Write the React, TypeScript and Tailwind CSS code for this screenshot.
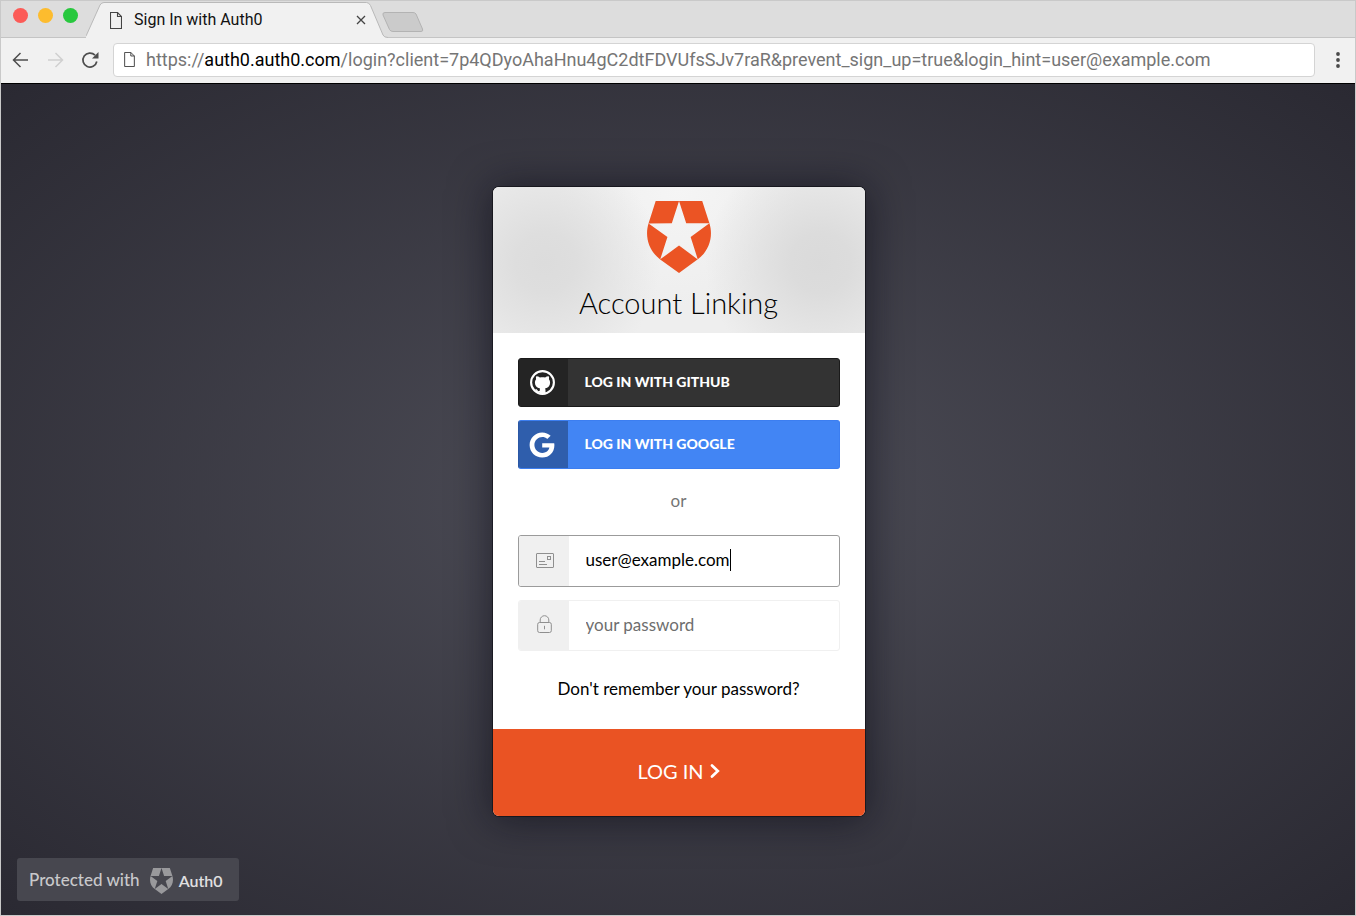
import { useState } from "react";
import { FaGoogle } from "react-icons/fa";

const SHIELD =
  "M21.98 7.448L19.62 0H4.347L2.02 7.448c-1.352 4.312.03 9.206 3.815 12.015L12.007 24l6.157-4.552c3.755-2.81 5.182-7.688 3.815-12.015l-6.16 4.58 2.343 7.45-6.157-4.597-6.158 4.58 2.358-7.433-6.188-4.55 7.63-.045L12.008 0l2.356 7.404 7.615.044z";

function Shield({ className }: { className: string }) {
  return (
    <svg viewBox="1.5 0 21 24" preserveAspectRatio="none" fill="currentColor" className={className} aria-hidden="true">
      <path d={SHIELD} />
    </svg>
  );
}

function PageIcon({ className }: { className: string }) {
  return (
    <svg viewBox="0 0 12 17" fill="none" stroke="currentColor" strokeWidth="1.1" className={className} aria-hidden="true">
      <path d="M.5.5h7l4 4v12H.5z" />
      <path d="M7.5.5v4h4" />
    </svg>
  );
}

function GithubIcon() {
  return (
    <svg viewBox="0 0 25 25" className="size-[25px]" aria-hidden="true">
      <circle cx="12.5" cy="12.5" r="11.4" fill="none" stroke="white" strokeWidth="2.1" />
      <path
        fill="white"
        d="M6.300 6.300C7.500 6.200 8.800 6.700 9.900 7.500c1.700-.4 3.500-.4 5.200 0 1.100-.8 2.400-1.300 3.600-1.200.5 1 .5 2.100.2 3 .8.9 1.200 2 1.200 3.300 0 3.600-1.800 5.300-5.100 5.800.3.500.5 1.100.5 1.900v3.900H9.600v-2.200c-2 .2-2.800-.4-3.500-1.600-.3-.6-.8-1-1.200-1.300 1.200-.2 2 .4 2.600 1.200.6.800 1.200 1 2.100.8.1-1 .2-2 .5-2.700-3.300-.5-5.200-2.200-5.200-5.800 0-1.300.4-2.400 1.200-3.300-.3-.9-.3-2 .2-3z"
      />
    </svg>
  );
}

function Browser() {
  return (
    <header className="bg-[#f1f1f1] font-[Roboto,sans-serif]">
      <div className="flex h-[37px] items-end border-b border-[#c4c4c4] bg-[#dddddd]">
        <div className="flex gap-2.5 self-start pt-[7px] pl-3">
          <span className="size-[15px] rounded-full bg-[#fc5b57]" />
          <span className="size-[15px] rounded-full bg-[#fdbc2e]" />
          <span className="size-[15px] rounded-full bg-[#28c83e]" />
        </div>
        <div className="relative -mb-px ml-2 flex h-[36px] w-[302px] items-center pr-[22px] pl-6">
          <svg viewBox="0 0 302 36" className="absolute inset-0 size-full" aria-hidden="true">
            <path
              d="M-2 35.500Q-.5 35.500 .5 33L14 3Q15.500.5 18 .5H280.500Q283 .5 284.500 3.500L297 33Q298 35.500 302 35.500V36H-2z"
              fill="#f1f1f1"
            />
            <path
              d="M-2 35.500Q-.5 35.500 .5 33L14 3Q15.500.5 18 .5H280.500Q283 .5 284.500 3.500L297 33Q298 35.500 302 35.500"
              fill="none"
              stroke="#b9b9b9"
            />
          </svg>
          <PageIcon className="relative h-[17px] w-3 text-[#444]" />
          <span className="relative ml-3 flex-1 text-base leading-5 text-[#111]">Sign In with Auth0</span>
          <button type="button" aria-label="Close tab" className="relative">
            <svg viewBox="0 0 10 10" className="size-[10px]" stroke="#444" strokeWidth="1.3" aria-hidden="true">
              <path d="M1 1l8 8M9 1L1 9" />
            </svg>
          </button>
        </div>
        <button type="button" aria-label="New tab" className="-ml-1.5 mb-[5px]">
          <svg viewBox="0 0 42 20" className="h-5 w-[42px]" aria-hidden="true">
            <path
              d="M3 .5H31Q33 .5 34 2L40.500 17Q41.500 19.500 39 19.500H11Q8.500 19.500 7.500 17.500L1 3Q.3.5 3 .5z"
              fill="#cbcbcb"
              stroke="#b3b3b3"
            />
          </svg>
        </button>
      </div>
      <div className="flex h-[46px] items-center border-b border-black pb-0.5 pl-[11px]">
        <button type="button" aria-label="Back" className="text-[#4d4d4d]">
          <svg viewBox="0 0 16 16" className="size-4" fill="none" stroke="currentColor" strokeWidth="1.500" aria-hidden="true">
            <path d="M16 8H1.500M8.500 1L1.500 8l7 7" />
          </svg>
        </button>
        <button type="button" aria-label="Forward" className="ml-5 text-[#d0d0d0]">
          <svg viewBox="0 0 16 16" className="size-4" fill="none" stroke="currentColor" strokeWidth="1.500" aria-hidden="true">
            <path d="M0 8h14.500M7.500 1l7 7-7 7" />
          </svg>
        </button>
        <button type="button" aria-label="Reload" className="ml-[17px] text-[#4d4d4d]">
          <svg viewBox="0 0 18 18" className="size-[18px]" fill="none" stroke="currentColor" strokeWidth="1.700" aria-hidden="true">
            <path d="M15.800 10.500A7 7 0 1 1 14 4.200" />
            <path d="M17.500 1v6.500H11z" fill="currentColor" stroke="none" />
          </svg>
        </button>
        <div className="ml-3.5 flex h-[34px] min-w-0 flex-1 items-center rounded border border-[#d4d4d4] bg-white pl-[10px]">
          <PageIcon className="h-[15px] w-[11px] shrink-0 text-[#444]" />
          <span className="ml-[11px] truncate text-lg leading-6 text-[#757575]">
            https://<span className="text-black">auth0.auth0.com</span>
            /login?client=7p4QDyoAhaHnu4gC2dtFDVUfsSJv7raR&amp;prevent_sign_up=true&amp;login_hint=user@example.com
          </span>
        </div>
        <button type="button" aria-label="Menu" className="mr-3.5 ml-5">
          <svg viewBox="0 0 6 18" className="h-[18px] w-1.5" fill="#4a4a4a" aria-hidden="true">
            <circle cx="3" cy="3" r="1.900" />
            <circle cx="3" cy="9" r="1.900" />
            <circle cx="3" cy="15" r="1.900" />
          </svg>
        </button>
      </div>
    </header>
  );
}

function LoginCard() {
  const [email, setEmail] = useState("user@example.com");
  return (
    <form className="w-[372px] overflow-hidden rounded-md bg-white shadow-[0_2px_40px_2px_rgba(8,8,20,0.6),0_0_0_1px_rgba(0,0,0,0.45)]">
      <div className="flex h-[146px] flex-col items-center bg-[radial-gradient(circle_at_14%_52%,#dcdcdc_0,#dedede_30px,transparent_115px),radial-gradient(circle_at_88%_52%,#dadada_0,#dcdcdc_30px,transparent_115px),radial-gradient(circle_at_50%_0%,#f5f5f5,#eeeeee_120px)] pt-3.5">
        <Shield className="h-[72px] w-16 text-[#eb5424]" />
        <h1 className="mt-3 text-[29px] leading-9 font-light text-black">Account Linking</h1>
      </div>
      <div className="flex flex-col px-[25px] pt-[25px]">
        <button type="button" className="flex h-[49px] items-stretch overflow-hidden rounded-[3px] border border-[#1a1a1a] bg-[#333333] text-white">
          <span className="flex w-[49px] items-center justify-center bg-[#242424] pr-0.5">
            <GithubIcon />
          </span>
          <span className="self-center pb-0.5 pl-[17px] text-sm leading-5 font-black">LOG IN WITH GITHUB</span>
        </button>
        <button type="button" className="mt-[13px] flex h-[49px] items-stretch overflow-hidden rounded-[3px] border border-[#3c7ef0] border-l-[#2a57a5] bg-[#4285f4] text-white">
          <span className="flex w-[49px] items-center justify-center bg-[#2f5eac] pr-0.5">
            <FaGoogle className="size-[26px]" />
          </span>
          <span className="self-center pb-0.5 pl-[17px] text-sm leading-5 font-black">LOG IN WITH GOOGLE</span>
        </button>
        <p className="mt-5 text-center text-[17px] leading-6 text-[#757575]">or</p>
        <label className="mt-[22px] flex h-[52px] overflow-hidden rounded-[3px] border border-[#9b9b9b]">
          <span className="flex w-[50px] items-center justify-center bg-[#f0f0f0] pb-0.5 pl-0.5">
            <svg viewBox="0 0 18 15" className="h-[15px] w-[18px]" fill="none" stroke="#8f8f8f" role="img" aria-label="Email">
              <rect x=".5" y=".5" width="17" height="14" rx=".5" />
              <rect x="11.500" y="3.500" width="3" height="3" />
              <path d="M3 8.500h6M3 11.500h8" />
            </svg>
          </span>
          <span className="flex flex-1 items-center pb-0.5 pl-[17px]">
            <input
              type="email"
              value={email}
              onChange={(e) => setEmail(e.target.value)}
              className="field-sizing-content text-[17px] leading-6 text-black outline-none"
            />
            <span className="h-[22px] w-px bg-black" />
          </span>
        </label>
        <label className="mt-[13px] flex h-[51px] overflow-hidden rounded-[3px] border border-[#f0f0f0]">
          <span className="flex w-[50px] items-center justify-center bg-[#f0f0f0] pb-[3px] pl-0.5">
            <svg viewBox="0 0 15 18" className="h-[18px] w-[15px]" fill="none" stroke="#8f8f8f" role="img" aria-label="Password">
              <rect x=".7" y="7.500" width="13.600" height="10" rx="1.800" />
              <path d="M3.200 7.500V5a4.300 4.300 0 0 1 8.600 0v2.500M7.500 10.800v3.500" />
            </svg>
          </span>
          <input
            type="password"
            placeholder="your password"
            className="min-w-0 flex-1 pb-0.5 pl-[17px] text-[17px] leading-6 text-black outline-none placeholder:text-[#6e6e6e]"
          />
        </label>
        <a href="#reset" className="mt-[26px] mb-7 text-center text-[17px] leading-6 text-black">
          Don't remember your password?
        </a>
      </div>
      <button type="submit" className="flex h-[87px] w-full items-center justify-center gap-1.5 bg-[#ea5323] pb-[3px] text-xl leading-6 text-white">
        LOG IN
        <svg viewBox="0 0 10 14" className="h-3.5 w-2.5" fill="none" stroke="white" strokeWidth="2.700" strokeLinecap="round" aria-hidden="true">
          <path d="M2 1.500L7.800 7 2 12.500" />
        </svg>
      </button>
    </form>
  );
}

export default function App() {
  return (
    <div className="flex min-h-screen flex-col border border-[#c9c9c9]">
      <Browser />
      <main className="relative flex flex-1 items-center justify-center bg-[radial-gradient(ellipse,#4e4e58_0%,#2a2932_100%)] pt-1 pl-px font-[Lato,sans-serif]">
        <LoginCard />
        <a
          href="#auth0"
          className="absolute bottom-3.5 left-4 flex h-[43px] items-center rounded-[3px] bg-[#47474f] px-3 pr-4 text-[17px] leading-6 font-medium text-[#c9c9cb]"
        >
          Protected with
          <Shield className="mt-0.5 ml-2.5 h-[26px] w-[23px] text-[#99999c]" />
          <span className="mt-0.5 ml-1.5 text-base leading-6 font-semibold text-[#e0e0e1]">Auth0</span>
        </a>
      </main>
    </div>
  );
}
